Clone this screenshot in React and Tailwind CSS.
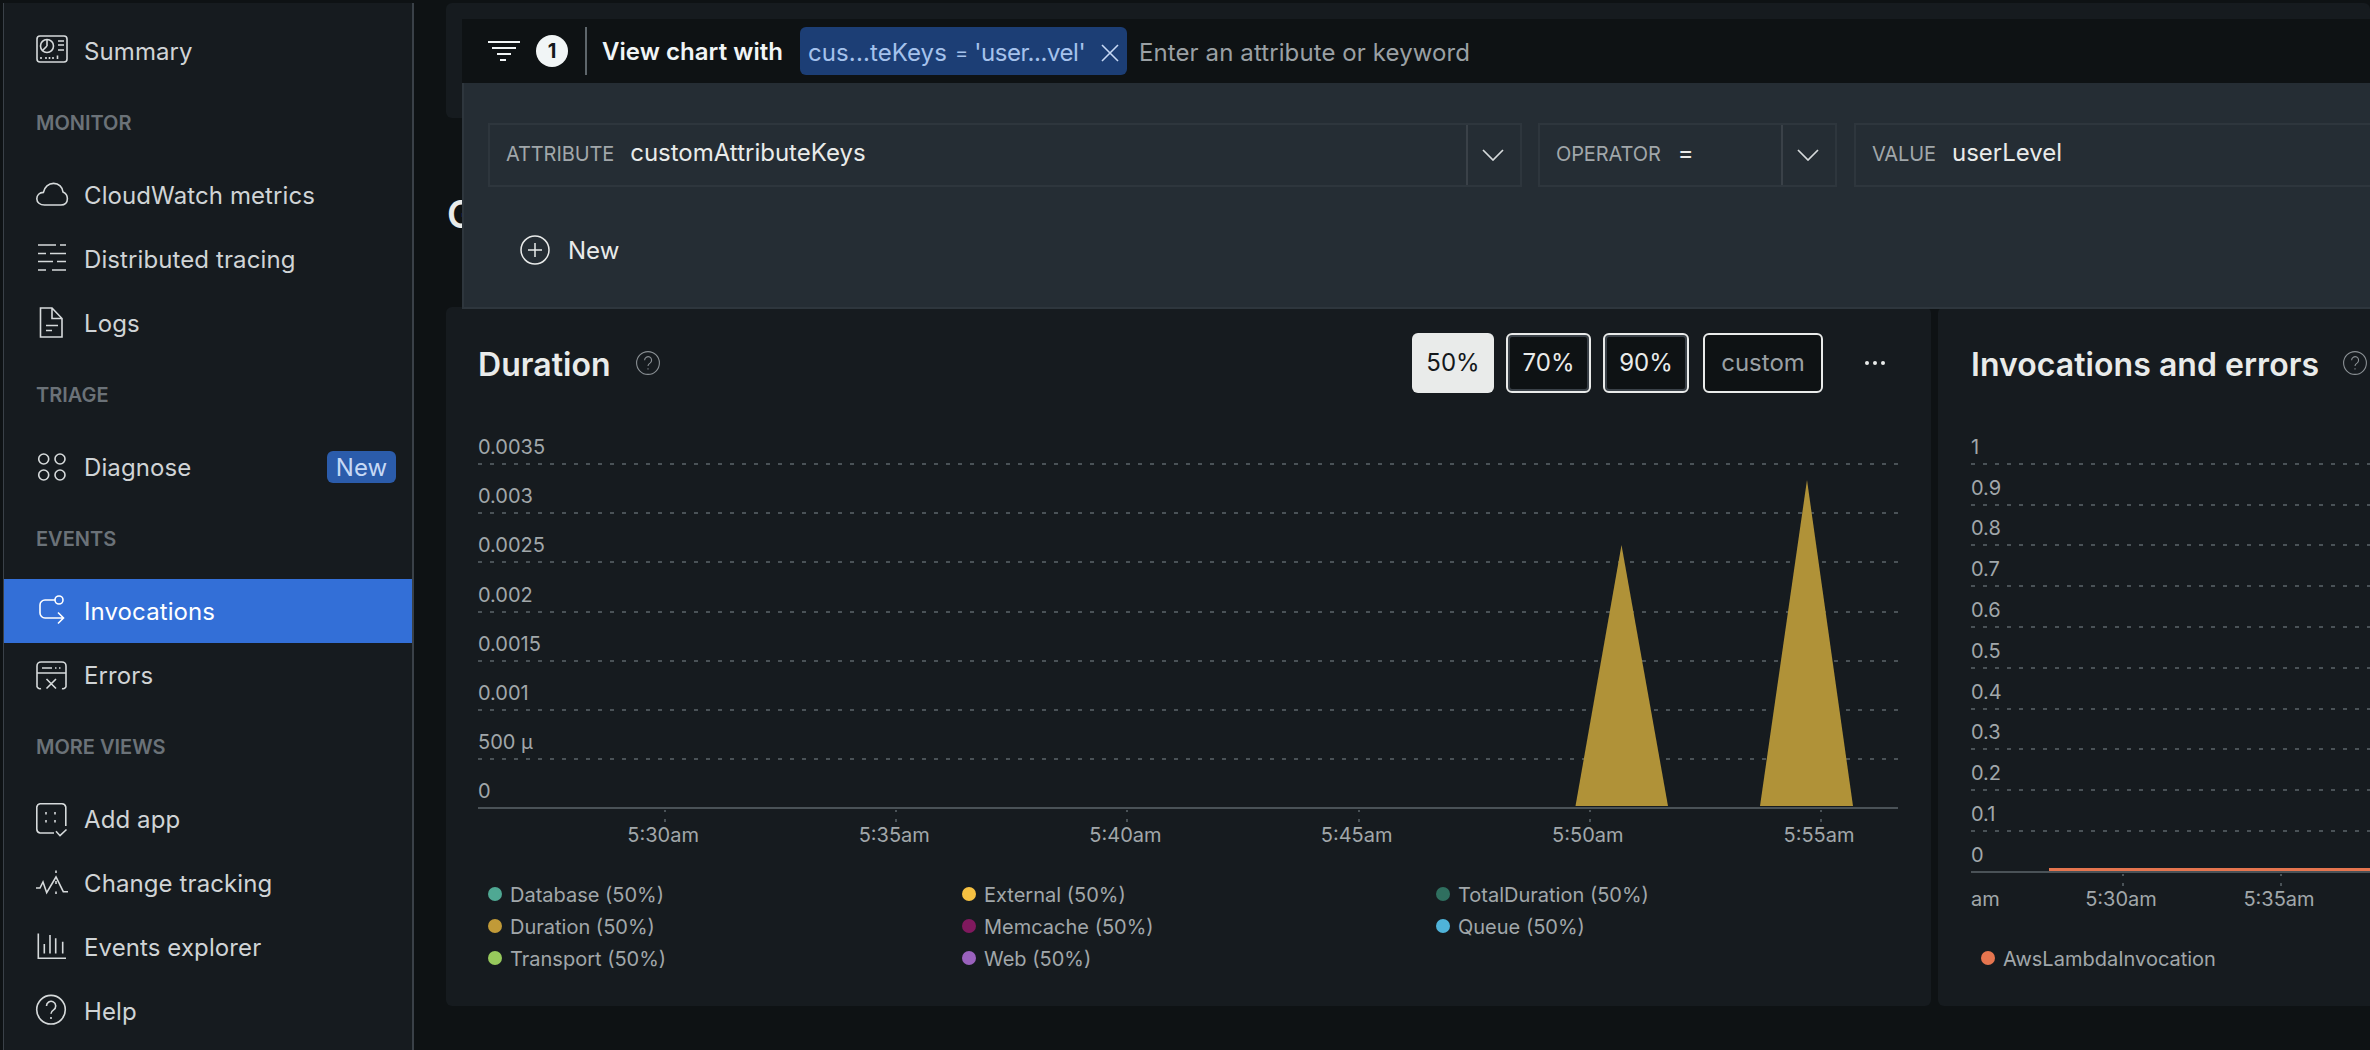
import React from "react";

const S = { fill: "none", stroke: "currentColor", strokeWidth: 1.6 };

const Ic = ({ children }) => (
  <svg width="32" height="32" viewBox="0 0 32 32" className="shrink-0 overflow-visible" {...S}>
    {children}
  </svg>
);

const icons = {
  summary: (
    <>
      <rect x="1" y="1" width="30" height="26" rx="3" />
      <circle cx="11" cy="11" r="6.5" />
      <path d="M11 11V4.5M11 11L6.5 15.5M22 6H28M22 10H28M22 15H28" />
      <path d="M5 22V24M10 22V24M13.5 22V24M17 22V24M21.5 20.5V24" />
    </>
  ),
  cloud: (
    <path d="M8.5 26C4 26 .8 23.4.8 19.8.8 16.2 3.6 13.6 7.4 13.4 8.4 8 12.6 4.4 17.6 4.4 22.8 4.4 26.6 8.2 27 13 29.8 14.2 31.4 16.8 31.4 19.8 31.4 23.6 28.8 26 25 26Z" />
  ),
  trace: <path d="M2 2H20M24 2H30M2 10.5H10M14 10.5H30M2 18.5H17M21 18.5H30M2 27H10M16 27H30" />,
  logs: <path d="M4.5 30V1H16L26 11.5V30ZM16 1V11.5H26M10 18.5H22M10 23.5H16" />,
  diagnose: (
    <>
      <circle cx="7.7" cy="8" r="5" />
      <circle cx="24" cy="8" r="5" />
      <circle cx="7.7" cy="24" r="5" />
      <circle cx="24" cy="24" r="5" />
    </>
  ),
  invocations: (
    <>
      <circle cx="23" cy="5" r="4" />
      <path d="M19 5H9A5 5 0 0 0 4 10V18A5 5 0 0 0 9 23H27M22 17.5L27.5 23L22 28.5" />
    </>
  ),
  errors: (
    <path d="M1 14V7A4 4 0 0 1 5 3H26A4 4 0 0 1 30 7V14M1 14H30M1 14V26A3 3 0 0 0 5 29.5M30 14V26A3 3 0 0 1 26 29.5M6 9H16M19 9H20.5M23 9H24.5M10.5 20L20 29.5M20 20L10.5 29.5" />
  ),
  add: (
    <path d="M18 30H4A4 4 0 0 1 .8 26V4A4 4 0 0 1 4 .8H26A4 4 0 0 1 29.8 4V23M10 9V11.5M19 9V11.5M10 17V19.5M19 17V19.5M20 28.3L24 32.7L30.5 26.5" />
  ),
  change: (
    <path d="M0 21H4L7 15L10.7 25.7L20 10L27.3 24.7H32M20 3.5V6M20 14V17M20 24.5V27" />
  ),
  explorer: <path d="M2.3 2.5V27.3H30M8.3 13V22.5M14 4V22.5M19.7 7.3V22.5M26.7 10.7V22.5" />,
  help: (
    <>
      <circle cx="15" cy="14.7" r="14.3" />
      <path d="M10.5 11A4.6 4.6 0 1 1 17.6 14.8C16 15.8 15 16.8 15 18.8M15 22V24" />
    </>
  ),
};

const Row = ({ icon, label, active, badge }) => (
  <div
    className={`flex h-16 items-center pl-8 pr-4 text-2xl ${
      active ? "bg-[#336fd7] text-white" : "text-[#d0d4d6]"
    }`}
  >
    <span className={active ? "text-white" : "text-[#d6dadb]"}>
      <Ic>{icons[icon]}</Ic>
    </span>
    <span className="ml-4 pt-[2px] tracking-[0.1px]">{label}</span>
    {badge && (
      <span className="ml-auto flex h-8 w-[69px] items-center justify-center rounded-md bg-[#2b5cab] pt-[2px] text-[#c6d8f5]">
        {badge}
      </span>
    )}
  </div>
);

const Section = ({ children }) => (
  <div className="flex h-20 items-center pl-8 text-xl font-semibold text-[#6b7278]">{children}</div>
);

const HelpIcon = () => (
  <svg width="24" height="24" viewBox="0 0 24 24" fill="none" stroke="#8a9094" strokeWidth="1.1" className="shrink-0">
    <circle cx="12" cy="12" r="11.4" />
    <path d="M8.6 9.2A3.5 3.5 0 1 1 14 12.1C12.7 12.9 12 13.7 12 15M12 17.2V18.6" />
  </svg>
);

const Chevron = () => (
  <svg width="22" height="12" viewBox="0 0 22 12" fill="none" stroke="#d6dadb" strokeWidth="1.7" className="mr-[3px]">
    <path d="M1 1L11 11L21 1" />
  </svg>
);

const Field = ({ className, label, value, gap, chevron }) => (
  <div className={`flex h-16 shrink-0 items-stretch border-2 border-[#2e363d] ${className}`}>
    <div className="flex flex-1 items-center pl-4">
      <span className="mb-[2px] text-xl tracking-[-0.1px] text-[#a1a7aa]">{label}</span>
      <span className={`mb-[4px] text-2xl text-[#e9ebea] ${gap}`}>{value}</span>
    </div>
    {chevron && (
      <div className="flex w-[54px] items-center justify-center border-l-2 border-[#3a4148]">
        <Chevron />
      </div>
    )}
  </div>
);

const dash =
  "h-[2px] w-full bg-[repeating-linear-gradient(90deg,#4a5257_0,#4a5257_4px,transparent_4px,transparent_12px)]";

const PercentButton = ({ label, w }) => (
  <div
    className={`flex h-[60px] items-center justify-center rounded-md border-2 border-[#e9ebea] bg-[#0e1214] text-2xl text-[#e9ebea] shadow-[inset_0_0_0_2px_#3a4148] ${w}`}
  >
    {label}
  </div>
);

const XCol = ({ label, w }) => (
  <div className={`flex shrink-0 flex-col items-center ${w}`}>
    <div className="mt-px h-[2px] w-[2px] bg-[#4a5257]" />
    <div className="mt-[7px] h-[3px] w-[2px] bg-[#4a5257]" />
    <div className="-ml-1 mt-px text-xl leading-6 text-[#a1a7aa]">{label}</div>
  </div>
);

const Legend = ({ color, label }) => (
  <div className="flex h-8 items-center text-xl text-[#a1a7aa]">
    <span className={`mr-2 h-[14px] w-[14px] shrink-0 rounded-full ${color}`} />
    <span className="pt-[2px]">{label}</span>
  </div>
);

const durationTicks = ["0.0035", "0.003", "0.0025", "0.002", "0.0015", "0.001", "500 µ", "0"];
const invocationTicks = ["1", "0.9", "0.8", "0.7", "0.6", "0.5", "0.4", "0.3", "0.2", "0.1", "0"];

const YRow = ({ label, last, h }) => (
  <div className={`flex flex-col justify-end ${h}`}>
    <div className="mb-[4px] text-xl leading-6 text-[#a1a7aa]">{label}</div>
    {last ? <div className="h-[2px] w-full bg-[#4a5257]" /> : <div className={dash} />}
  </div>
);

export default function App() {
  return (
    <div className="relative flex h-[1050px] w-[2370px] overflow-hidden bg-[#0e1214] font-['Inter',sans-serif]">
      <aside className="ml-[3px] mt-[3px] w-[411px] shrink-0 border-l border-r-2 border-l-[#3a4148] border-r-[#3a4148] bg-[#161b1f] pt-4">
        <Row icon="summary" label="Summary" />
        <Section>MONITOR</Section>
        <Row icon="cloud" label="CloudWatch metrics" />
        <Row icon="trace" label="Distributed tracing" />
        <Row icon="logs" label="Logs" />
        <Section>TRIAGE</Section>
        <Row icon="diagnose" label="Diagnose" badge="New" />
        <Section>EVENTS</Section>
        <Row icon="invocations" label="Invocations" active />
        <Row icon="errors" label="Errors" />
        <Section>MORE VIEWS</Section>
        <Row icon="add" label="Add app" />
        <Row icon="change" label="Change tracking" />
        <Row icon="explorer" label="Events explorer" />
        <Row icon="help" label="Help" />
      </aside>

      <main className="flex min-w-0 flex-1 flex-col pl-8 pt-[3px]">
        <div className="h-[115px] shrink-0 rounded-md bg-[#161b1f]" />
        <div className="flex h-[189px] shrink-0 items-center pl-px pt-[4px] text-[38px] font-semibold text-[#e9ebea]">
          G
        </div>

        <div className="flex h-[699px] shrink-0 gap-[7px]">
          <section className="w-[1485px] shrink-0 rounded-md bg-[#161b1f] px-8 pt-[26px]">
            <div className="flex h-[60px] items-center">
              <h2 className="pt-[3px] text-[32px] font-semibold tracking-[0.05px] text-[#e9ebea]">Duration</h2>
              <span className="ml-[25px]">
                <HelpIcon />
              </span>
              <div className="ml-auto flex items-center">
                <div className="flex h-[60px] w-[82px] items-center justify-center rounded-md bg-[#e9ebea] text-2xl text-[#14181b]">
                  50%
                </div>
                <div className="ml-3">
                  <PercentButton label="70%" w="w-[85px]" />
                </div>
                <div className="ml-3">
                  <PercentButton label="90%" w="w-[86px]" />
                </div>
                <div className="ml-[14px] flex h-[60px] w-[120px] items-center justify-center rounded-md border-2 border-[#e9ebea] bg-[#0e1214] text-2xl text-[#9aa0a4]">
                  custom
                </div>
                <svg width="20" height="6" viewBox="0 0 20 6" fill="#e9ebea" className="ml-[42px] mr-[-2px]">
                  <circle cx="2" cy="3" r="2" />
                  <circle cx="10" cy="3" r="2" />
                  <circle cx="18" cy="3" r="2" />
                </svg>
                <span className="w-[16px]" />
              </div>
            </div>

            <div className="relative mt-[23px] w-[1420px]">
              {durationTicks.map((t, i) => (
                <YRow key={t} label={t} last={i === durationTicks.length - 1} h="h-[49.14px]" />
              ))}
              <svg className="absolute left-0 top-0" width="1420" height="393" viewBox="0 0 1420 393">
                <path d="M1097.5 390L1143.5 129L1190 390Z" fill="#b09238" />
                <path d="M1282 390L1329 64L1375 390Z" fill="#b09238" />
              </svg>
            </div>
            <div className="flex pl-[71.5px]">
              {["5:30am", "5:35am", "5:40am", "5:45am", "5:50am", "5:55am"].map((l) => (
                <XCol key={l} label={l} w="w-[231.2px]" />
              ))}
            </div>

            <div className="mt-[31px] grid grid-cols-[474px_474px_474px] pl-[10px]">
              <Legend color="bg-[#4fa893]" label="Database (50%)" />
              <Legend color="bg-[#f6c142]" label="External (50%)" />
              <Legend color="bg-[#2f6f5f]" label="TotalDuration (50%)" />
              <Legend color="bg-[#c19a38]" label="Duration (50%)" />
              <Legend color="bg-[#80195e]" label="Memcache (50%)" />
              <Legend color="bg-[#4fb3d9]" label="Queue (50%)" />
              <Legend color="bg-[#97c95c]" label="Transport (50%)" />
              <Legend color="bg-[#9a62bd]" label="Web (50%)" />
            </div>
          </section>

          <section className="min-w-0 flex-1 overflow-hidden rounded-l-md bg-[#161b1f] pl-[33px] pt-[26px]">
            <div className="flex h-[60px] items-center whitespace-nowrap">
              <h2 className="pt-[3px] text-[32px] font-semibold tracking-[0.05px] text-[#e9ebea]">
                Invocations and errors
              </h2>
              <span className="ml-6">
                <HelpIcon />
              </span>
            </div>
            <div className="relative mt-[31px]">
              {invocationTicks.map((t, i) => (
                <YRow key={t} label={t} last={i === invocationTicks.length - 1} h="h-[40.8px]" />
              ))}
              <div className="absolute bottom-[2px] left-[78px] right-0 h-[3px] bg-[#e5754f]" />
            </div>
            <div className="flex">
              <div className="w-[73px] shrink-0 pt-[14px] text-xl leading-6 text-[#a1a7aa]">am</div>
              <XCol label="5:30am" w="w-[158px]" />
              <XCol label="5:35am" w="w-[158px]" />
            </div>
            <div className="mt-[31px] pl-[10px]">
              <Legend color="bg-[#e5754f]" label="AwsLambdaInvocation" />
            </div>
          </section>
        </div>
      </main>

      {/* Filter popover lying over the page */}
      <div className="absolute left-[462px] right-0 top-[19px] h-[290px]">
        <div className="flex h-16 items-center bg-[#0e1214] pl-[26px]">
          <svg width="32" height="20" viewBox="0 0 32 20" fill="none" stroke="#f1f5f6" strokeWidth="2" className="shrink-0">
            <path d="M0 1H32M4 7H28M9 13H23M12 19H18" />
          </svg>
          <span className="ml-4 flex h-8 w-8 shrink-0 items-center justify-center rounded-full bg-[#f1f5f6] text-xl font-bold text-[#14181b]">
            1
          </span>
          <span className="ml-[17px] h-12 w-[2px] shrink-0 bg-[#5e666b]" />
          <span className="ml-[15px] w-[198px] shrink-0 whitespace-nowrap pt-[2px] text-2xl font-semibold tracking-[0.05px] text-[#f1f5f6]">
            View chart with
          </span>
          <div className="flex h-12 w-[327px] shrink-0 items-center rounded-md bg-[#1c3e75] pl-2 pt-[3px] text-2xl text-[#a5c2ec]">
            <span className="tracking-[0.1px]">cus...teKeys</span>
            <span className="ml-[8px] text-xl">=</span>
            <span className="ml-[6px] tracking-[-0.45px]">'user...vel'</span>
            <svg width="18" height="18" viewBox="0 0 18 18" fill="none" stroke="#c6d8f5" strokeWidth="1.6" className="ml-auto mr-2">
              <path d="M1 1L17 17M17 1L1 17" />
            </svg>
          </div>
          <span className="ml-3 pt-[4px] text-2xl tracking-[0.1px] text-[#9aa0a4]">Enter an attribute or keyword</span>
        </div>
        <div className="h-[226px] border-b-2 border-l-2 border-[#2e363d] bg-[#252d34] pl-6 pt-10">
          <div className="flex">
            <Field className="w-[1034px]" label="ATTRIBUTE" value="customAttributeKeys" gap="ml-4" chevron />
            <Field className="ml-4 w-[299px]" label="OPERATOR" value="=" gap="ml-[17px]" chevron />
            <Field className="ml-[17px] w-[600px]" label="VALUE" value="userLevel" gap="ml-4" />
          </div>
          <div className="mt-12 flex h-[30px] items-center pl-8 text-2xl text-[#e9ebea]">
            <svg width="30" height="30" viewBox="0 0 30 30" fill="none" stroke="#e9ebea" strokeWidth="1.5">
              <circle cx="15" cy="15" r="14" />
              <path d="M15 8V22M8 15H22" />
            </svg>
            <span className="ml-[18px] pt-[2px]">New</span>
          </div>
        </div>
      </div>
    </div>
  );
}
